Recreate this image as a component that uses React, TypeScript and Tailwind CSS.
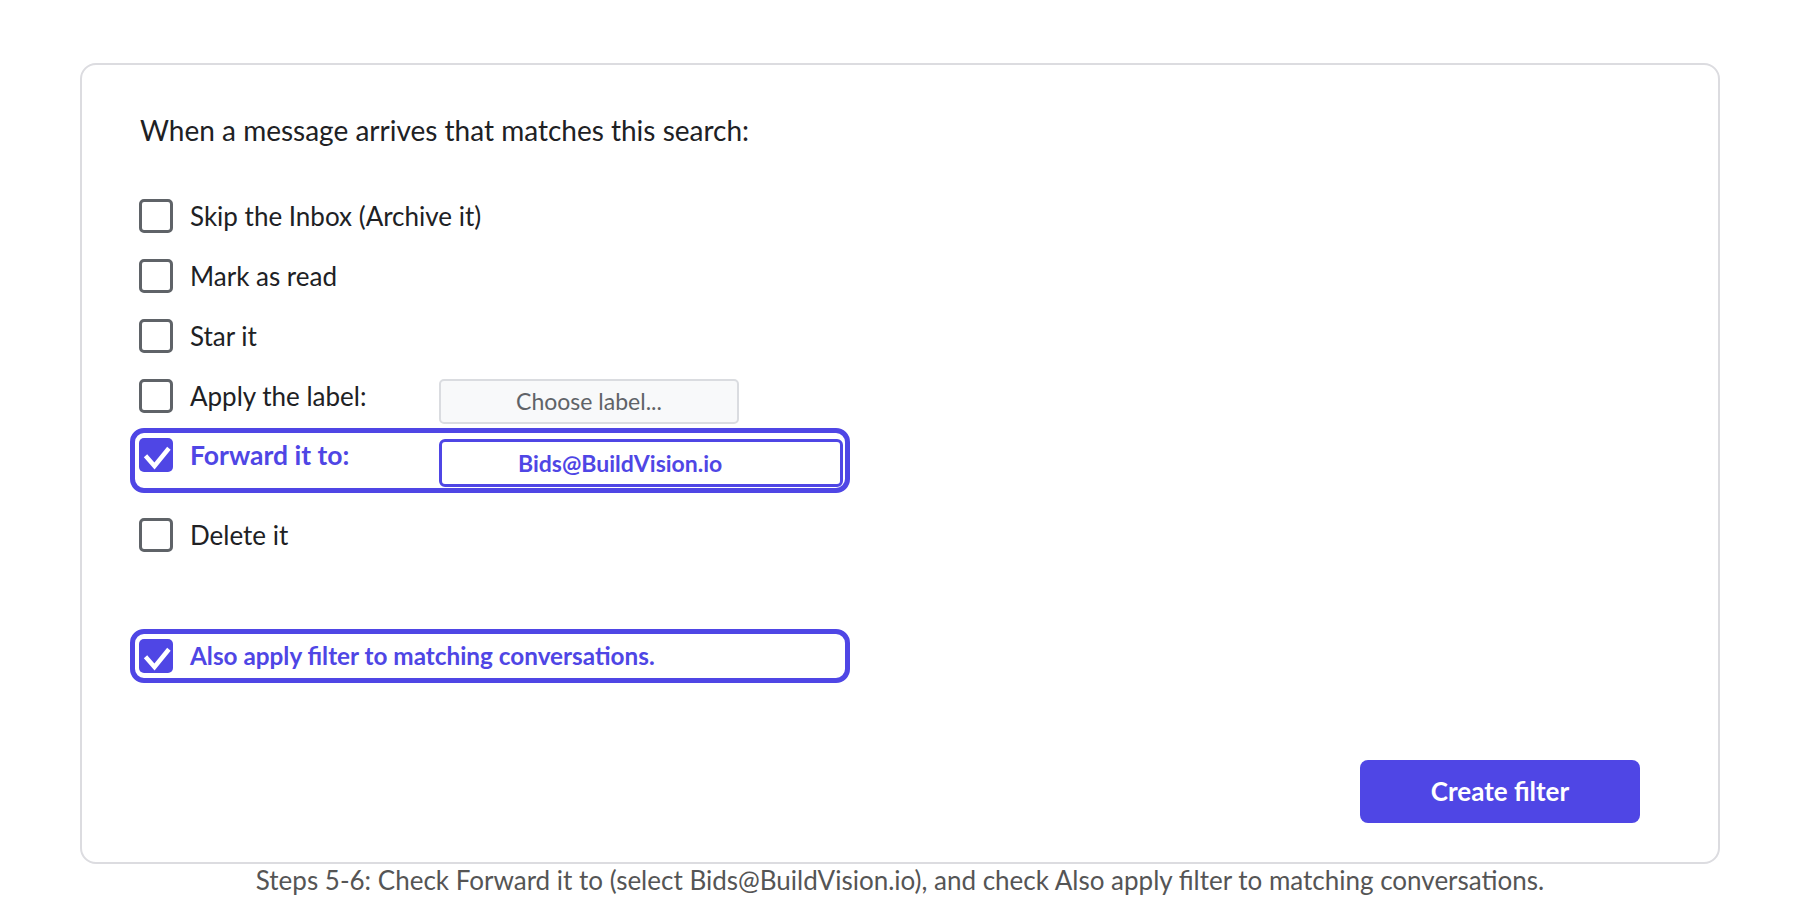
import React from "react";

type Row = {
  label: string;
  checked?: boolean;
};

const Checkbox: React.FC<{ checked?: boolean }> = ({ checked }) => {
  if (checked) {
    return (
      <span className="flex h-[34px] w-[34px] shrink-0 items-center justify-center rounded-[5px] bg-[#4f46e5]">
        <svg width="34" height="34" viewBox="0 0 34 34" fill="none">
          <path
            d="M8 19.5 L15.5 28 L28.5 12"
            stroke="white"
            strokeWidth="4.5"
            strokeLinecap="square"
            strokeLinejoin="miter"
          />
        </svg>
      </span>
    );
  }
  return (
    <span className="block h-[34px] w-[34px] shrink-0 rounded-[5px] border-[3px] border-[#5f6368] bg-white" />
  );
};

const plainRows: Row[] = [
  { label: "Skip the Inbox (Archive it)" },
  { label: "Mark as read" },
  { label: "Star it" },
];

export default function App() {
  return (
    <div className="min-h-[920px] w-[1800px] bg-white pt-[63px] [font-family:Lato,sans-serif]">
      <div className="mx-[80px] flex h-[801px] flex-col rounded-[16px] border-2 border-[#dcdce0] pl-[48px]">
        <h2 className="ml-[10px] mt-[47px] text-[28px] leading-[36px] text-[#202124]">
          When a message arrives that matches this search:
        </h2>

        <div className="mt-[38px] flex flex-col">
          {plainRows.map((r) => (
            <div
              key={r.label}
              className="flex h-[60px] w-[720px] items-center gap-[17px] border-[5px] border-transparent pl-[4px]"
            >
              <Checkbox />
              <span className="text-[26px] leading-[32px] text-[#202124]">{r.label}</span>
            </div>
          ))}

          <div className="flex h-[60px] w-[720px] items-center gap-[17px] border-[5px] border-transparent pl-[4px]">
            <Checkbox />
            <span className="w-[232px] text-[26px] leading-[32px] text-[#202124]">
              Apply the label:
            </span>
            <div className="mt-[11px] flex h-[45px] w-[300px] items-center justify-center rounded-[5px] border-2 border-[#dadce0] bg-[#f8f9fa] text-[23px] text-[#5f6368]">
              Choose label...
            </div>
          </div>

          <div className="mt-[2px] flex h-[65px] w-[720px] items-start gap-[17px] rounded-[14px] border-[5px] border-[#4f46e5] pl-[4px] pr-[2px]">
            <div className="mt-[5px]">
              <Checkbox checked />
            </div>
            <span className="mt-[6px] w-[232px] text-[26.5px] font-bold leading-[32px] text-[#4f46e5]">
              Forward it to:
            </span>
            <div className="mt-[6px] flex h-[48px] flex-1 items-center rounded-[6px] border-[3px] border-[#4f46e5] pl-[76px] text-[23px] font-bold text-[#4f46e5]">
              Bids@BuildVision.io
            </div>
          </div>

          <div className="mt-[12px] flex h-[60px] w-[720px] items-center gap-[17px] border-[5px] border-transparent pl-[4px]">
            <Checkbox />
            <span className="text-[26px] leading-[32px] text-[#202124]">Delete it</span>
          </div>

          <div className="mt-[64px] flex h-[54px] w-[720px] items-center gap-[17px] rounded-[14px] border-[5px] border-[#4f46e5] pl-[4px]">
            <Checkbox checked />
            <span className="text-[24.3px] font-bold leading-[32px] text-[#4f46e5]">
              Also apply filter to matching conversations.
            </span>
          </div>
        </div>

        <button className="mr-[78px] mt-[77px] flex h-[63px] w-[280px] items-center justify-center self-end rounded-[8px] bg-[#4f46e5] text-[26px] font-bold text-white">
          Create filter
        </button>
      </div>

      <p className="mt-[1px] text-center text-[26px] leading-[30px] text-[#555555]">
        Steps 5-6: Check Forward it to (select Bids@BuildVision.io), and check Also apply filter to
        matching conversations.
      </p>
    </div>
  );
}
